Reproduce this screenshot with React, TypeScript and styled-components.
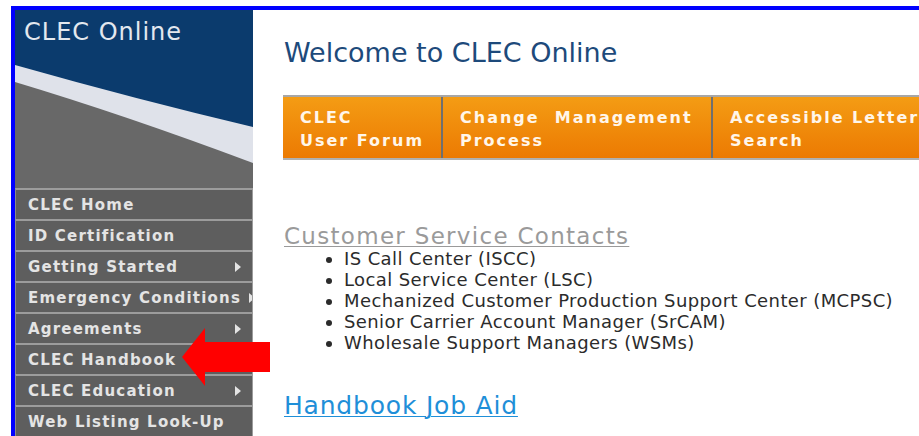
import React, { FC } from "react";
import styled, { createGlobalStyle } from "styled-components";

const GlobalStyle = createGlobalStyle`
  html, body {
    margin: 0;
    padding: 0;
    background: #ffffff;
    overflow: hidden;
  }
`;

const Frame = styled.div`
  margin: 6px 0 0 11px;
  border-top: 4px solid #0000ff;
  border-left: 4px solid #0000ff;
  display: grid;
  grid-template-columns: 238px 1fr;
  height: 426px;
  position: relative;
  overflow: hidden;
`;

const Sidebar = styled.aside`
  display: flex;
  flex-direction: column;
  background: #5f5f5f;
`;

const Header = styled.div`
  background: #0b3b6d;
  height: 178px;
  display: flex;
  flex-direction: column;
`;

const SiteName = styled.div`
  height: 55px;
  padding: 8px 0 0 9px;
  box-sizing: border-box;
  font-family: "DejaVu Sans", Verdana, sans-serif;
  font-size: 24px;
  letter-spacing: 1px;
  color: #e3e8ef;
`;

const Wave = styled.svg`
  display: block;
  flex: 1;
`;

const Menu = styled.nav`
  display: flex;
  flex-direction: column;
`;

const MenuItem = styled.div`
  height: 31px;
  box-sizing: border-box;
  border-top: 2px solid #9c9c9c;
  border-left: 1px solid #8a8a8a;
  border-right: 1px solid #9c9c9c;
  background: #5e5e5e;
  display: flex;
  align-items: center;
  padding: 0 0 0 12px;
  overflow: hidden;
  white-space: nowrap;
  font-family: "DejaVu Sans", Verdana, sans-serif;
  font-weight: bold;
  font-size: 15px;
  letter-spacing: 1.2px;
  color: #e4e4e4;
`;

const MenuLabel = styled.span`
  flex: none;
  padding-right: 8px;
`;

const Caret = styled.span`
  flex: none;
  margin-left: auto;
  margin-right: 11px;
  width: 0;
  height: 0;
  border-top: 5px solid transparent;
  border-bottom: 5px solid transparent;
  border-left: 6px solid #e4e4e4;
`;

const Content = styled.main`
  padding: 26px 0 0 30px;
  display: flex;
  flex-direction: column;
  font-family: "DejaVu Sans", Verdana, sans-serif;
  min-width: 0;
`;

const Title = styled.h1`
  margin: 0 0 0 1px;
  font-weight: normal;
  font-size: 27px;
  line-height: 34px;
  color: #1d4a7b;
`;

const TabBar = styled.div`
  margin: 25px 0 64px;
  height: 65px;
  display: flex;
  box-sizing: border-box;
  border-top: 2px solid #a7a7a7;
  border-bottom: 2px solid #b0b0b0;
  background: linear-gradient(#f49c14, #ec7a02);
  width: 700px;
`;

const Tab = styled.div<{ $w?: number }>`
  flex: ${(p) => (p.$w ? `0 0 ${p.$w}px` : "1")};
  box-sizing: border-box;
  border-right: 2px solid #6f6f6f;
  padding: 9px 0 0 17px;
  font-weight: bold;
  font-size: 16px;
  line-height: 23px;
  letter-spacing: 2px;
  color: #fff6ea;
  white-space: pre;
  &:last-child {
    border-right: none;
  }
`;

const Section = styled.a<{ $color: string; $size: number; $track: number }>`
  display: inline-block;
  align-self: flex-start;
  margin-left: 1px;
  font-size: ${(p) => p.$size}px;
  line-height: 24px;
  letter-spacing: ${(p) => p.$track}px;
  color: ${(p) => p.$color};
  text-decoration: underline;
  text-decoration-thickness: 1px;
  text-underline-offset: 2px;
`;

const Contacts = styled.ul`
  margin: 0 0 41px;
  padding: 0 0 0 61px;
  list-style: disc;
  font-size: 18px;
  line-height: 21px;
  letter-spacing: 0.4px;
  color: #2b2b2b;
`;

const Pointer = styled.svg`
  position: absolute;
  left: 167px;
  top: 318px;
`;

const menu = [
  { label: "CLEC Home" },
  { label: "ID Certification" },
  { label: "Getting Started", sub: true },
  { label: "Emergency Conditions", sub: true },
  { label: "Agreements", sub: true },
  { label: "CLEC Handbook" },
  { label: "CLEC Education", sub: true },
  { label: "Web Listing Look-Up" },
];

const contacts = [
  "IS Call Center (ISCC)",
  "Local Service Center (LSC)",
  "Mechanized Customer Production Support Center (MCPSC)",
  "Senior Carrier Account Manager (SrCAM)",
  "Wholesale Support Managers (WSMs)",
];

const App: FC = () => {
  return (
    <>
      <GlobalStyle />
      <Frame>
        <Sidebar>
          <Header>
            <SiteName>CLEC Online</SiteName>
            <Wave viewBox="0 0 238 123" width="238" height="123" preserveAspectRatio="none">
              <path d="M0 0 Q120 34 238 62 L238 123 L0 123 Z" fill="#dfe2ea" />
              <path d="M0 17 Q110 50 238 98 L238 123 L0 123 Z" fill="#686868" />
            </Wave>
          </Header>
          <Menu>
            {menu.map((m) => (
              <MenuItem key={m.label}>
                <MenuLabel>{m.label}</MenuLabel>
                {m.sub && <Caret />}
              </MenuItem>
            ))}
          </Menu>
        </Sidebar>
        <Content>
          <Title>Welcome to CLEC Online</Title>
          <TabBar>
            <Tab $w={160}>{"CLEC\nUser Forum"}</Tab>
            <Tab $w={270}>{"Change  Management\nProcess"}</Tab>
            <Tab>{"Accessible Letter\nSearch"}</Tab>
          </TabBar>
          <Section $color="#9a9a9a" $size={23} $track={1.3}>
            Customer Service Contacts
          </Section>
          <Contacts>
            {contacts.map((c) => (
              <li key={c}>{c}</li>
            ))}
          </Contacts>
          <Section $color="#1f8fd8" $size={25} $track={0.8}>
            Handbook Job Aid
          </Section>
        </Content>
        <Pointer width="90" height="58" viewBox="0 0 90 58">
          <polygon points="0,29 23,0 23,14 88,14 88,44 23,44 23,58" fill="#ff0000" />
        </Pointer>
      </Frame>
    </>
  );
};

export default App;
